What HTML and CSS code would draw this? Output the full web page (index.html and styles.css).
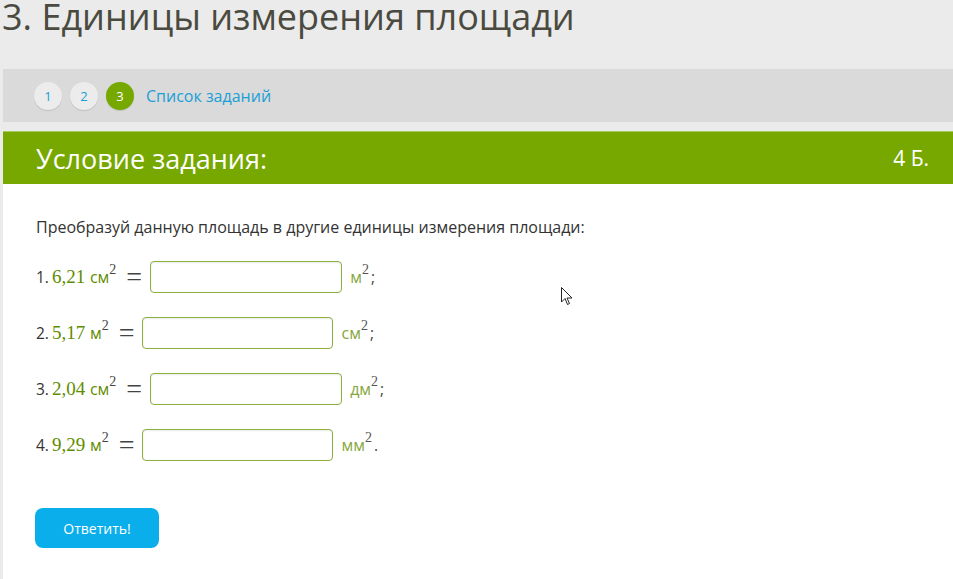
FILE: index.html
```html
<!DOCTYPE html>
<html lang="ru">
<head>
    <meta charset="UTF-8">
    <title>3. Единицы измерения площади</title>
    <link rel="stylesheet" href="styles.css">
</head>
<body>
    <h1 class="page-title">3. Единицы измерения площади</h1>

    <div class="task-nav">
        <span class="step">1</span>
        <span class="step">2</span>
        <span class="step step-active">3</span>
        <a class="task-list" href="#">Список заданий</a>
    </div>

    <div class="task">
        <div class="task-head">
            <span class="task-title">Условие задания:</span>
            <span class="task-points">4 Б.</span>
        </div>
        <div class="task-body">
            <p class="task-text">Преобразуй данную площадь в другие единицы измерения площади:</p>

            <div class="row">
                <span class="num">1.</span>
                <span class="math">6,21 <span class="unit">см</span><sup>2</sup></span>
                <span class="eq">=</span>
                <input class="answer answer-wide" type="text">
                <span class="res">м<sup>2</sup></span><span class="punct">;</span>
            </div>

            <div class="row">
                <span class="num">2.</span>
                <span class="math">5,17 <span class="unit">м</span><sup>2</sup></span>
                <span class="eq">=</span>
                <input class="answer" type="text">
                <span class="res">см<sup>2</sup></span><span class="punct">;</span>
            </div>

            <div class="row">
                <span class="num">3.</span>
                <span class="math">2,04 <span class="unit">см</span><sup>2</sup></span>
                <span class="eq">=</span>
                <input class="answer answer-wide" type="text">
                <span class="res">дм<sup>2</sup></span><span class="punct">;</span>
            </div>

            <div class="row">
                <span class="num">4.</span>
                <span class="math">9,29 <span class="unit">м</span><sup>2</sup></span>
                <span class="eq">=</span>
                <input class="answer" type="text">
                <span class="res">мм<sup>2</sup></span><span class="punct">.</span>
            </div>

            <button type="button" class="submit-btn">Ответить!</button>

            <!-- mouse pointer from the screenshot -->
            <svg class="cursor" width="12" height="19" viewBox="0 0 12 19">
                <path d="M0.5 0.5 L0.5 15 L4 11.5 L6.5 17.5 L8.5 16.5 L6 11 L11 11 Z" fill="#fff" stroke="#222" stroke-width="1"/>
            </svg>
        </div>
    </div>
</body>
</html>
```

FILE: styles.css
```css
body {
    margin: 0;
    background-color: #ebebeb;
    font-family: "Open Sans", Arial, sans-serif;
    color: #333;
    overflow: hidden;
}
.page-title {
    margin: 0;
    padding: 0 0 0 2px;
    font-size: 36px;
    font-weight: normal;
    line-height: 34px;
    color: #4a4a40;
}
.task-nav {
    display: flex;
    align-items: center;
    gap: 8px;
    height: 53px;
    margin: 35px 0 0 3px;
    padding-left: 31px;
    background-color: #dadada;
}
.step {
    display: flex;
    align-items: center;
    justify-content: center;
    width: 28px;
    height: 28px;
    border-radius: 50%;
    background-color: #ececec;
    box-shadow: 0 1px 1px rgba(0,0,0,0.12);
    font-size: 13px;
    color: #1a9fd6;
}
.step-active {
    background-color: #76a800;
    color: #fff;
}
.task-list {
    margin-left: 4px;
    font-size: 16px;
    color: #1a9fd6;
    text-decoration: none;
}
.task {
    margin: 9px 0 0 3px;
}
.task-head {
    display: flex;
    justify-content: space-between;
    align-items: center;
    height: 52px;
    padding: 0 24px 0 33px;
    background-color: #76a800;
    border-top: 1px solid #a8c860;
    color: #fff;
}
.task-title {
    font-size: 27px;
}
.task-points {
    font-size: 21px;
}
.task-body {
    position: relative;
    background-color: #fff;
    padding: 30px 33px 40px;
    height: 325px;
}
.task-text {
    margin: 0 0 9px;
    font-size: 16px;
    line-height: 26px;
    color: #333;
}
.row {
    display: flex;
    align-items: center;
    height: 56px;
    font-size: 15.5px;
}
.num {
    margin-right: 3px;
}
.math {
    font-family: "Liberation Serif", "Times New Roman", serif;
    font-size: 19px;
    color: #5f8c00;
}
.unit {
    font-family: "Open Sans", Arial, sans-serif;
    font-size: 16px;
}
sup {
    font-family: "Liberation Serif", "Times New Roman", serif;
    font-size: 14px;
    color: #444;
    vertical-align: 9px;
    line-height: 0;
}
.eq {
    margin: 0 8px 0 10px;
    font-family: "Liberation Serif", "Times New Roman", serif;
    font-size: 28px;
    line-height: 20px;
    color: #444;
}
.answer {
    width: 189px;
    height: 30px;
    padding: 0;
    border: 1px solid #8cb040;
    border-radius: 4px;
    box-shadow: inset 0 1px 2px rgba(0,0,0,0.08);
    background-color: #fff;
}
.answer-wide {
    width: 190px;
}
.res {
    margin-left: 8px;
    font-size: 16px;
    color: #86a63c;
}
.res sup {
    color: #555;
}
.punct {
    margin-left: 2px;
    color: #444;
}
.submit-btn {
    margin: 35px 0 0 -1px;
    width: 124px;
    height: 40px;
    border: none;
    border-radius: 8px;
    background-color: #0aaeea;
    color: #fff;
    font-family: "Open Sans", Arial, sans-serif;
    font-size: 14px;
    cursor: pointer;
}
.cursor {
    position: absolute;
    left: 558px;
    top: 103px;
}
```
